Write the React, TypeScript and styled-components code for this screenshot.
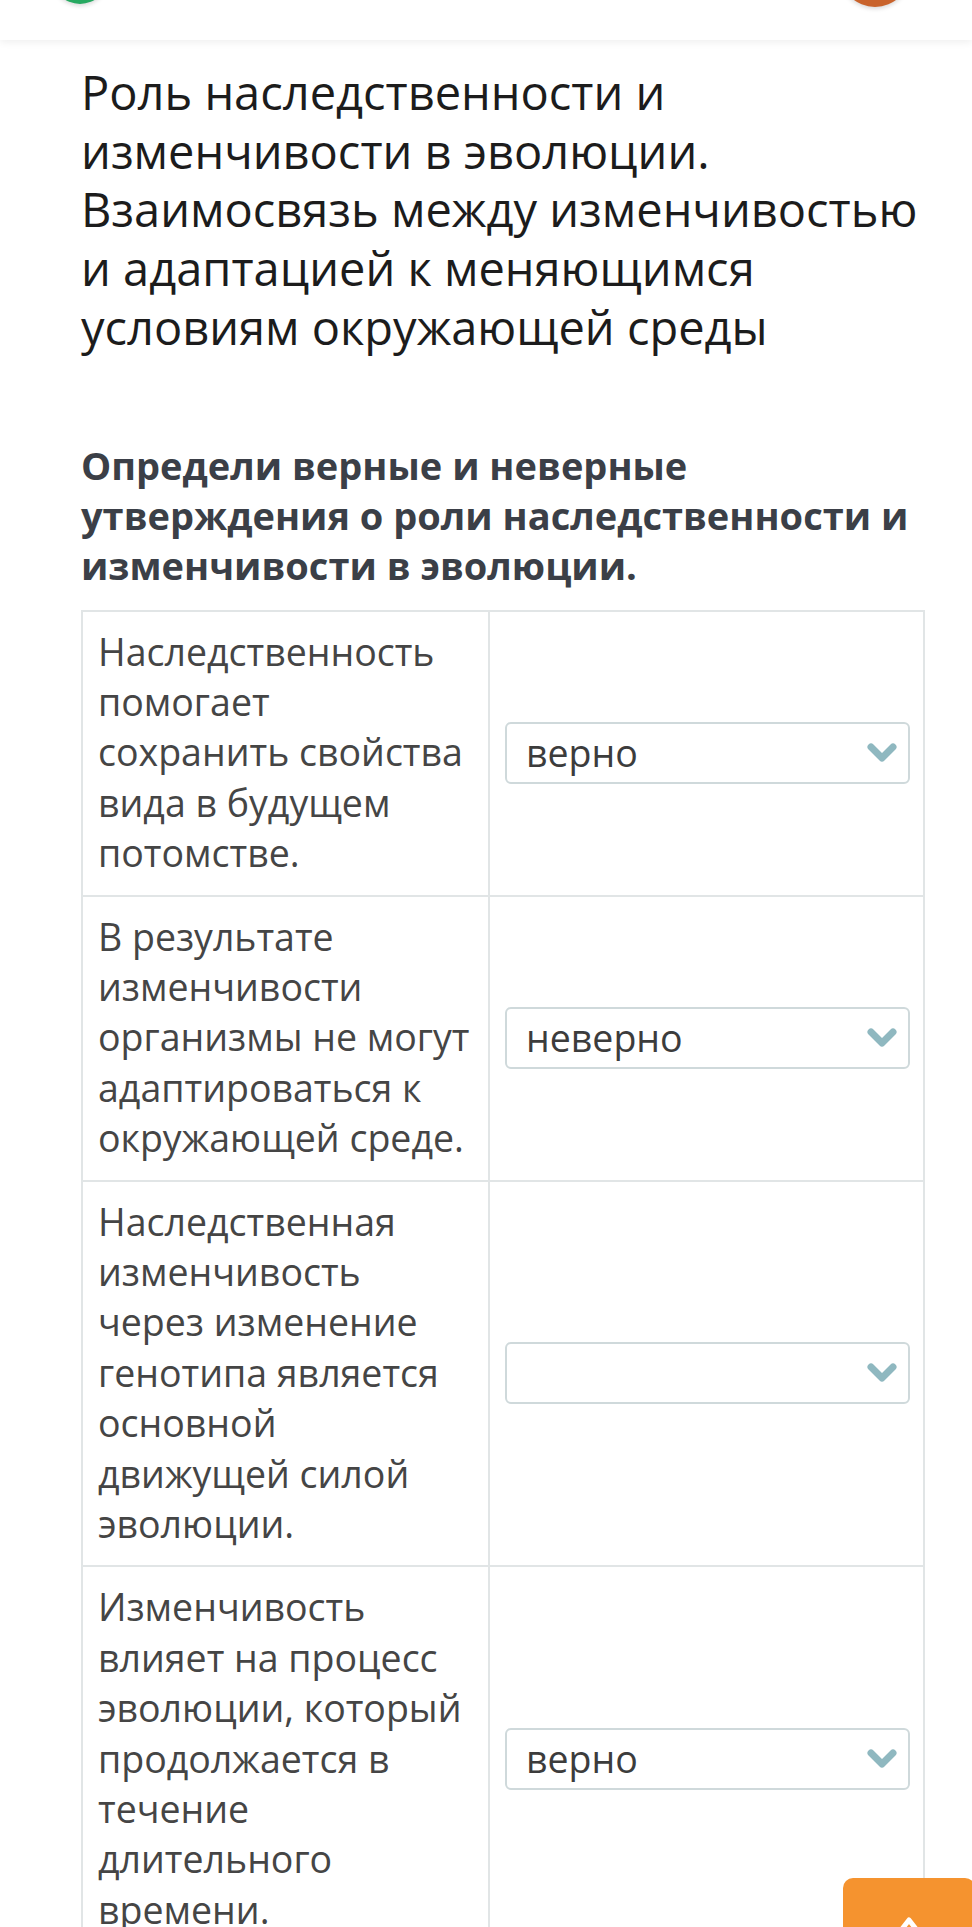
import React from "react";
import styled, { createGlobalStyle } from "styled-components";

const GlobalStyle = createGlobalStyle`
  html, body {
    margin: 0;
    padding: 0;
    background: #ffffff;
    font-family: "Open Sans", "Noto Sans", sans-serif;
  }
  body { overflow: hidden; }
`;

const Page = styled.div`
  position: relative;
  min-height: 1927px;
  background: #ffffff;
`;

const Header = styled.header`
  position: relative;
  height: 40px;
  background: #ffffff;
  box-shadow: 0 2px 8px rgba(0, 0, 0, 0.07);
  display: flex;
  justify-content: space-between;
  padding: 0 62px 0 52px;
  overflow: hidden;
  z-index: 2;
`;

const Dot = styled.div<{ $color: string; $size: number; $bottom: number }>`
  width: ${(p) => p.$size}px;
  height: ${(p) => p.$size}px;
  flex: none;
  border-radius: 50%;
  background: ${(p) => p.$color};
  margin-top: ${(p) => p.$bottom - p.$size}px;
  box-shadow: 0 2px 4px rgba(0, 0, 0, 0.15);
`;

const Content = styled.main`
  padding: 23px 47px 0 81px;
`;

const Title = styled.h1`
  margin: 0 -15px 0 0;
  font-family: "Open Sans", sans-serif;
  font-weight: 400;
  font-size: 47px;
  line-height: 58.7px;
  color: #1c1c1c;
`;

const Subtitle = styled.h2`
  margin: 83px 0 20px;
  font-family: "Open Sans", sans-serif;
  font-weight: 700;
  font-size: 38px;
  line-height: 50px;
  color: #3b3f47;
`;

const Table = styled.div`
  display: grid;
  grid-template-columns: 407px 1fr;
  border: 2px solid #e1e5e6;
  border-bottom: none;
`;

const Cell = styled.div<{ $right?: boolean }>`
  padding: ${(p) => (p.$right ? "15px 13px 16px 15px" : "15px 4px 16px 15px")};
  border-bottom: 2px solid #e1e5e6;
  ${(p) => (p.$right ? "" : "border-right: 2px solid #e1e5e6;")}
  display: flex;
  align-items: center;
`;

const Statement = styled.p`
  margin: 0;
  font-family: "Open Sans", sans-serif;
  font-size: 37.5px;
  line-height: 50.4px;
  color: #454545;
`;

const Line = styled.span`
  display: block;
  white-space: nowrap;
`;

const Select = styled.div`
  flex: 1;
  height: 62px;
  box-sizing: border-box;
  border: 2px solid #cfd9db;
  border-radius: 6px;
  background: #ffffff;
  display: flex;
  align-items: center;
  justify-content: space-between;
  padding: 0 10px 0 19px;
`;

const SelectText = styled.span`
  font-family: "Open Sans", sans-serif;
  font-size: 37.5px;
  color: #3c3c3c;
  line-height: 1;
`;

const Chevron = () => (
  <svg width="32" height="22" viewBox="0 0 32 22">
    <path
      d="M5 5 L16 16 L27 5"
      fill="none"
      stroke="#8fb8c0"
      strokeWidth="7"
      strokeLinecap="round"
      strokeLinejoin="round"
    />
  </svg>
);

const UpButton = styled.button`
  position: absolute;
  left: 843px;
  top: 1878px;
  width: 132px;
  height: 90px;
  border: none;
  border-radius: 10px;
  background: #f5932f;
  display: flex;
  justify-content: center;
  align-items: flex-start;
  padding-top: 34px;
  z-index: 3;
`;

const rows = [
  {
    lines: ["Наследственность", "помогает", "сохранить свойства", "вида в будущем", "потомстве."],
    value: "верно",
  },
  {
    lines: ["В результате", "изменчивости", "организмы не могут", "адаптироваться к", "окружающей среде."],
    value: "неверно",
  },
  {
    lines: [
      "Наследственная",
      "изменчивость",
      "через изменение",
      "генотипа является",
      "основной",
      "движущей силой",
      "эволюции.",
    ],
    value: "",
  },
  {
    lines: [
      "Изменчивость",
      "влияет на процесс",
      "эволюции, который",
      "продолжается в",
      "течение",
      "длительного",
      "времени.",
    ],
    value: "верно",
  },
];

export default function App() {
  return (
    <Page>
      <GlobalStyle />
      <Header>
        <Dot $color="#27a961" $size={56} $bottom={4} />
        <Dot $color="#c9632c" $size={70} $bottom={7} />
      </Header>
      <Content>
        <Title>
          Роль наследственности и изменчивости в эволюции. Взаимосвязь между
          изменчивостью и адаптацией к меняющимся условиям окружающей среды
        </Title>
        <Subtitle>
          Определи верные и неверные утверждения о роли наследственности и
          изменчивости в эволюции.
        </Subtitle>
        <Table>
          {rows.map((r, i) => (
            <React.Fragment key={i}>
              <Cell>
                <Statement>
                  {r.lines.map((l, j) => (
                    <Line key={j}>{l}</Line>
                  ))}
                </Statement>
              </Cell>
              <Cell $right>
                <Select>
                  <SelectText>{r.value}</SelectText>
                  <Chevron />
                </Select>
              </Cell>
            </React.Fragment>
          ))}
        </Table>
      </Content>
      <UpButton aria-label="Наверх">
        <svg width="40" height="30" viewBox="0 0 40 30">
          <path
            d="M6 26 L20 8 L34 26"
            fill="none"
            stroke="#ffffff"
            strokeWidth="5"
            strokeLinecap="round"
            strokeLinejoin="round"
          />
        </svg>
      </UpButton>
    </Page>
  );
}
